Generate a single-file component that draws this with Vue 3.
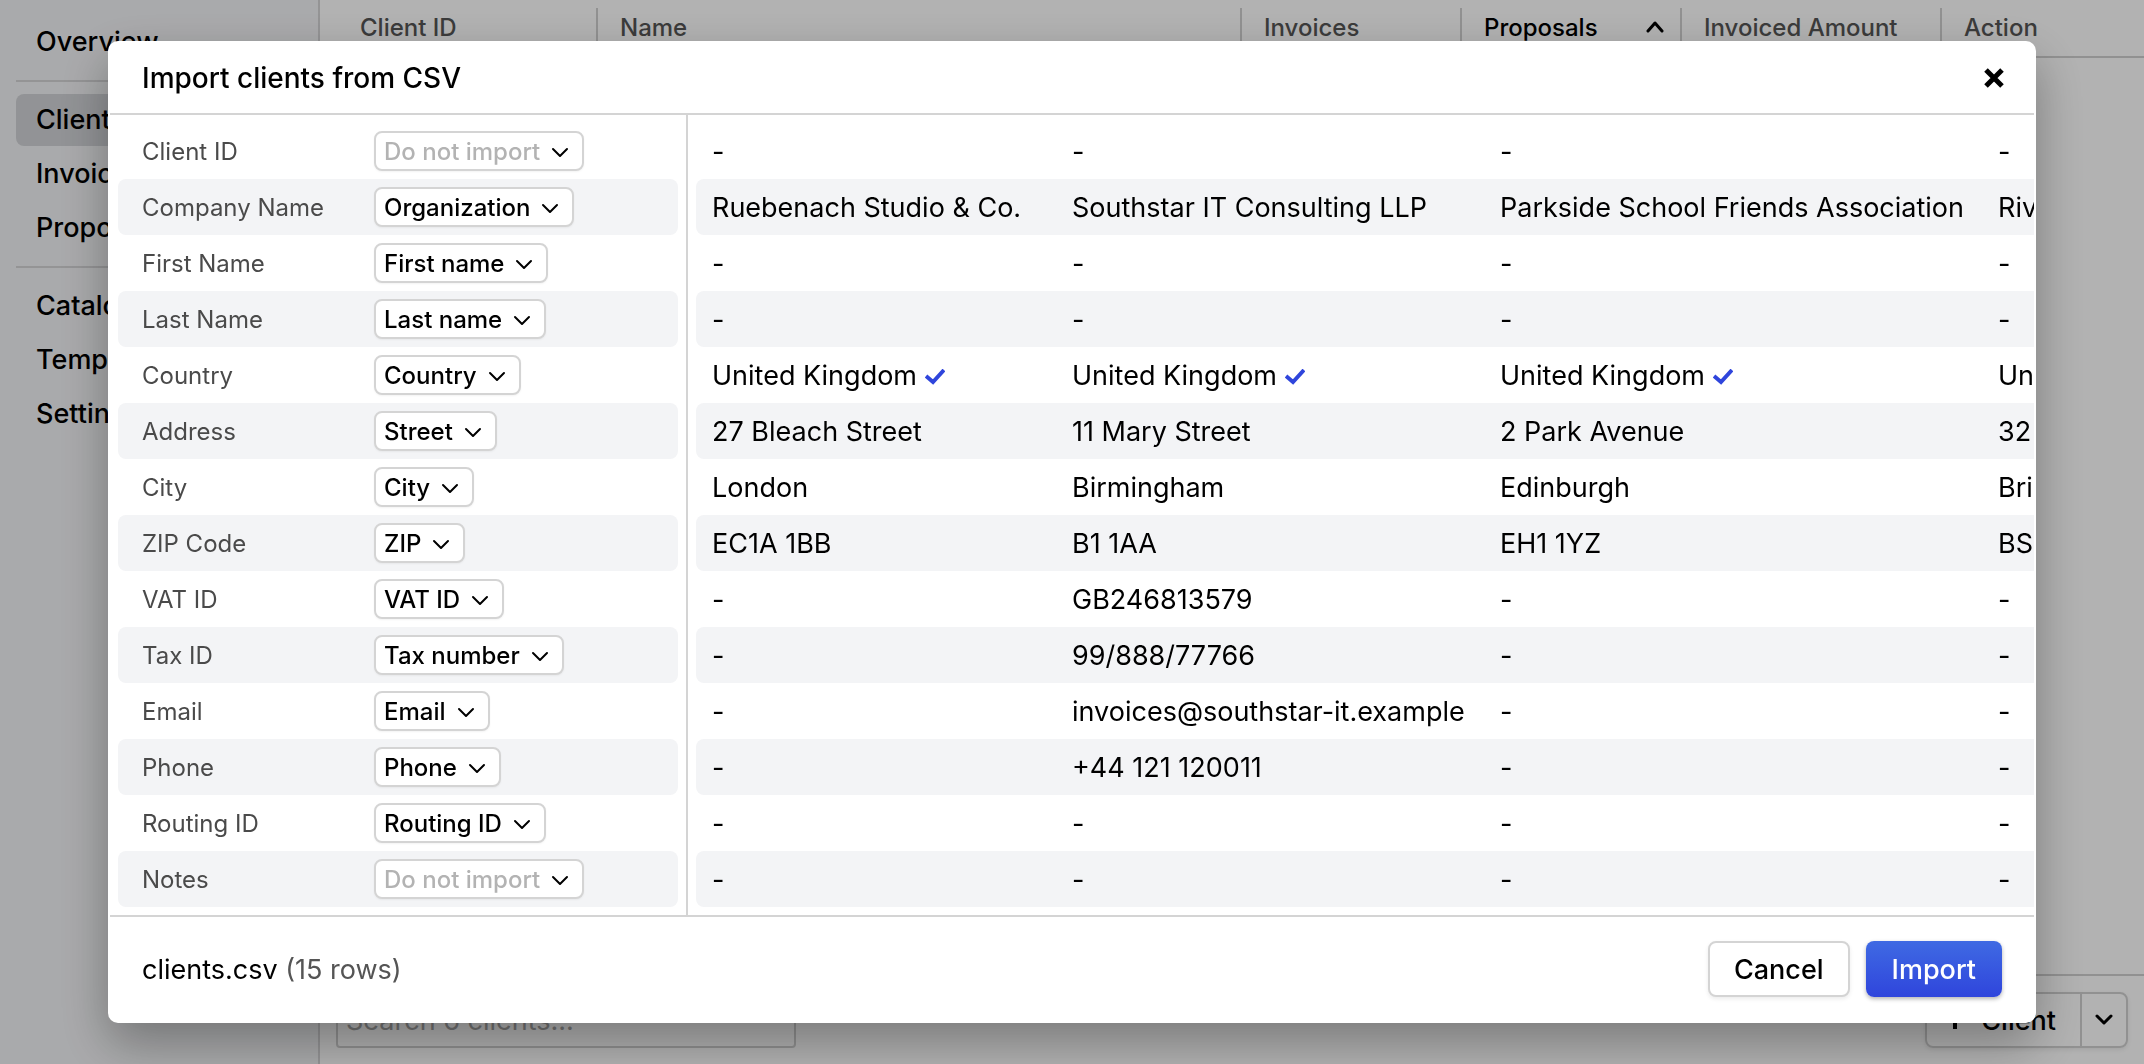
<template>
  <div class="app">
    <nav class="sidebar">
      <template v-for="(group, g) in navGroups" :key="g">
        <hr v-if="g > 0" />
        <a
          v-for="item in group"
          :key="item"
          href="#"
          :class="{ active: item === 'Clients' }"
        >{{ item }}</a>
      </template>
    </nav>

    <main class="main">
      <table class="client-head">
        <thead>
          <tr>
            <th class="col-id">Client ID</th>
            <th>Name</th>
            <th class="col-count">Invoices</th>
            <th class="col-count sorted">
              <span>Proposals</span>
              <svg viewBox="0 0 18 12" width="18" height="12">
                <path d="M2 10l7-8 7 8" />
              </svg>
            </th>
            <th class="col-amount">Invoiced Amount</th>
            <th class="col-action">Action</th>
          </tr>
        </thead>
      </table>

      <div class="toolbar">
        <input type="text" aria-label="Search clients" placeholder="Search 6 clients..." />
        <div class="split">
          <button type="button" class="add">
            <svg viewBox="0 0 20 20" width="20" height="20"><path d="M10 1v18M1 10h18" /></svg>
            Client
          </button>
          <button type="button" class="more" aria-label="More">
            <svg viewBox="0 0 18 12" width="18" height="12"><path d="M2 2l7 7 7-7" /></svg>
          </button>
        </div>
      </div>
    </main>

    <div class="overlay">
      <section class="modal" role="dialog" aria-labelledby="import-title">
        <header class="modal-header">
          <h2 id="import-title">Import clients from CSV</h2>
          <button type="button" class="close" aria-label="Close">
            <svg viewBox="0 0 20 20" width="20" height="20"><path d="M2 2l16 16M18 2L2 18" /></svg>
          </button>
        </header>

        <div class="modal-body">
          <div class="mapping">
            <table>
              <tbody>
                <tr v-for="(field, i) in fields" :key="field.label">
                  <th scope="row"><label :for="'field-' + i">{{ field.label }}</label></th>
                  <td>
                    <span class="picker">
                      <select
                        :id="'field-' + i"
                        v-model="field.column"
                        :class="{ unset: field.column === SKIP }"
                      >
                        <option v-for="c in columns" :key="c">{{ c }}</option>
                      </select>
                      <svg viewBox="0 0 18 12" width="18" height="12"><path d="M2 2l7 7 7-7" /></svg>
                    </span>
                  </td>
                </tr>
              </tbody>
            </table>
          </div>

          <div class="preview">
            <table>
              <colgroup>
                <col class="w1" /><col class="w2" /><col class="w3" /><col class="w4" />
              </colgroup>
              <tbody>
                <tr v-for="field in fields" :key="field.label">
                  <td v-for="(value, v) in field.values" :key="v">
                    {{ value }}
                    <svg v-if="field.label === 'Country'" viewBox="0 0 20 16" width="20" height="16">
                      <path d="M1 7l7 6L19 1" />
                    </svg>
                  </td>
                </tr>
              </tbody>
            </table>
          </div>
        </div>

        <footer class="modal-footer">
          <p>clients.csv <span>(15 rows)</span></p>
          <button type="button" class="btn">Cancel</button>
          <button type="button" class="btn primary">Import</button>
        </footer>
      </section>
    </div>
  </div>
</template>

<script setup>
import { reactive } from 'vue'

const SKIP = 'Do not import'

const navGroups = [
  ['Overview'],
  ['Clients', 'Invoices', 'Proposals'],
  ['Catalog', 'Templates', 'Settings']
]

const columns = [
  SKIP, 'Organization', 'First name', 'Last name', 'Country', 'Street', 'City',
  'ZIP', 'VAT ID', 'Tax number', 'Email', 'Phone', 'Routing ID'
]

const empty = ['-', '-', '-', '-']

const fields = reactive([
  { label: 'Client ID', column: SKIP, values: empty },
  {
    label: 'Company Name',
    column: 'Organization',
    values: ['Ruebenach Studio & Co.', 'Southstar IT Consulting LLP', 'Parkside School Friends Association', 'Riverside']
  },
  { label: 'First Name', column: 'First name', values: empty },
  { label: 'Last Name', column: 'Last name', values: empty },
  { label: 'Country', column: 'Country', values: ['United Kingdom', 'United Kingdom', 'United Kingdom', 'United Kingdom'] },
  { label: 'Address', column: 'Street', values: ['27 Bleach Street', '11 Mary Street', '2 Park Avenue', '32'] },
  { label: 'City', column: 'City', values: ['London', 'Birmingham', 'Edinburgh', 'Bristol'] },
  { label: 'ZIP Code', column: 'ZIP', values: ['EC1A 1BB', 'B1 1AA', 'EH1 1YZ', 'BS1'] },
  { label: 'VAT ID', column: 'VAT ID', values: ['-', 'GB246813579', '-', '-'] },
  { label: 'Tax ID', column: 'Tax number', values: ['-', '99/888/77766', '-', '-'] },
  { label: 'Email', column: 'Email', values: ['-', 'invoices@southstar-it.example', '-', '-'] },
  { label: 'Phone', column: 'Phone', values: ['-', '+44 121 120011', '-', '-'] },
  { label: 'Routing ID', column: 'Routing ID', values: empty },
  { label: 'Notes', column: SKIP, values: empty }
])
</script>

<style>
body {
  margin: 0;
}
</style>

<style scoped>
.app {
  display: flex;
  min-height: 100vh;
  font-family: Inter, "Liberation Sans", sans-serif;
  font-size: 27px;
  color: #000;
  background: #fff;
}

.app *,
.app {
  box-sizing: border-box;
}

svg {
  flex: none;
  fill: none;
  stroke: currentColor;
  stroke-width: 2;
  stroke-linecap: round;
  stroke-linejoin: round;
}

button,
input,
select {
  font: inherit;
  color: inherit;
}

/* Sidebar */
.sidebar {
  display: flex;
  flex-direction: column;
  gap: 2px;
  flex: none;
  width: 320px;
  padding: 16px 14px 16px 16px;
  border-right: 2px solid #d4d4d6;
  background: #f3f4f6;
}

.sidebar a {
  padding: 0 20px;
  border-radius: 8px;
  line-height: 52px;
  font-weight: 500;
  color: #000;
  text-decoration: none;
}

.sidebar a.active {
  background: #d1d3d7;
}

.sidebar hr {
  width: 100%;
  height: 2px;
  margin: 10px 0;
  border: 0;
  background: #d4d4d6;
}

/* Client list behind the dialog */
.main {
  display: flex;
  flex: 1;
  flex-direction: column;
  justify-content: space-between;
  min-width: 0;
}

.client-head {
  width: 100%;
  table-layout: fixed;
  border-collapse: separate;
  border-spacing: 0;
  border-bottom: 2px solid #d0d0d0;
  font-size: 24px;
}

.client-head th {
  height: 56px;
  padding: 0 24px 2px;
  font-weight: 500;
  text-align: left;
  white-space: nowrap;
  color: #555;
  background: linear-gradient(#d0d0d0, #d0d0d0) left center / 2px 40px no-repeat;
}

.client-head th:first-child {
  padding-left: 40px;
  background: none;
}

.client-head th.sorted {
  color: #000;
}

.sorted svg {
  float: right;
  margin-top: 8px;
  margin-right: -8px;
  stroke-width: 3;
}

.col-id {
  width: 276px;
}

.col-count {
  width: 220px;
}

.col-amount {
  width: 260px;
}

.col-action {
  width: 204px;
}

.toolbar {
  display: flex;
  justify-content: space-between;
  padding: 16px;
  border-top: 2px solid #d0d0d0;
}

.toolbar input {
  width: 460px;
  height: 56px;
  padding: 0 8px;
  border: 2px solid #d0d0d0;
  border-radius: 4px;
  background: #fff;
}

.toolbar input::placeholder {
  color: #a6a6a6;
}

.split {
  display: flex;
  height: 56px;
  border: 2px solid #d0d0d0;
  border-radius: 8px;
  box-shadow: 0 2px 4px rgba(0, 0, 0, 0.08);
}

.split button {
  display: flex;
  align-items: center;
  border: 0;
  background: none;
  font-weight: 500;
}

.split .add {
  gap: 16px;
  padding: 0 24px 0 18px;
}

.split .add svg {
  stroke-width: 4;
  stroke-linecap: butt;
}

.split .more {
  padding: 0 13px;
  border-left: 2px solid #d0d0d0;
}

.split .more svg {
  stroke-width: 3;
}

/* Dialog */
.overlay {
  position: fixed;
  inset: 0;
  display: flex;
  align-items: center;
  padding: 0 108px;
  background: rgba(0, 0, 0, 0.3);
}

.modal {
  width: 100%;
  padding: 2px;
  border-radius: 10px;
  background: #fff;
  box-shadow: 0 20px 50px rgba(0, 0, 0, 0.32);
}

.modal-header {
  display: flex;
  align-items: center;
  justify-content: space-between;
  height: 72px;
  padding: 0 30px 0 32px;
  border-bottom: 2px solid #d4d4d4;
}

.modal-header h2 {
  margin: 0;
  font-size: 28px;
  font-weight: 500;
}

.close {
  display: flex;
  padding: 0;
  border: 0;
  background: none;
}

.close svg {
  stroke-width: 5;
  stroke-linecap: butt;
}

.modal-body {
  display: flex;
}

.modal-body table {
  border-collapse: separate;
  border-spacing: 0;
  table-layout: fixed;
}

.modal-body tr {
  height: 56px;
}

.modal-body tr:nth-child(even) > * {
  background: #f3f4f6;
}

.modal-body tr > :first-child {
  border-radius: 8px 0 0 8px;
}

.modal-body tr > :last-child {
  border-radius: 0 8px 8px 0;
}

.mapping {
  flex: none;
  width: 578px;
  padding: 8px;
  border-right: 2px solid #d4d4d4;
}

.mapping table {
  width: 100%;
  font-size: 24px;
}

.mapping th {
  width: 256px;
  padding: 0 0 0 24px;
  font-weight: 400;
  text-align: left;
  color: #4a4a4a;
}

.mapping td {
  padding: 0;
}

.picker {
  position: relative;
  display: flex;
  width: fit-content;
}

.picker select {
  height: 40px;
  padding: 0 42px 0 8px;
  border: 2px solid #d4d4d4;
  border-radius: 8px;
  outline: 0;
  appearance: none;
  field-sizing: content;
  background: #fff;
  font-weight: 500;
  box-shadow: 0 1px 2px rgba(0, 0, 0, 0.05);
}

.picker select.unset {
  color: #b3b3b3;
}

.picker svg {
  position: absolute;
  top: 16px;
  right: 15px;
  pointer-events: none;
}

.preview {
  flex: 1;
  min-width: 0;
  padding: 8px 0 8px 8px;
  overflow-x: auto;
  scrollbar-width: none;
}

.preview table {
  width: 1686px;
}

.preview td {
  padding: 0 16px;
  white-space: nowrap;
}

.preview td svg {
  stroke: #2f45dc;
  stroke-width: 4;
  stroke-linecap: butt;
  stroke-linejoin: miter;
}

.w1 {
  width: 360px;
}

.w2 {
  width: 428px;
}

.w3 {
  width: 498px;
}

.w4 {
  width: 400px;
}

.modal-footer {
  display: flex;
  align-items: center;
  gap: 16px;
  padding: 24px 32px;
  border-top: 2px solid #d4d4d4;
}

.modal-footer p {
  flex: 1;
  margin: 0;
}

.modal-footer p span {
  color: #555;
}

.btn {
  height: 56px;
  padding: 0 24px;
  border: 2px solid #d4d4d4;
  border-radius: 8px;
  background: #fff;
  font-weight: 500;
  box-shadow: 0 2px 4px rgba(0, 0, 0, 0.08);
}

.btn.primary {
  padding: 0 26px;
  border: 0;
  color: #fff;
  background: linear-gradient(#3f6ae3, #2f45dc);
  box-shadow: 0 2px 4px rgba(0, 0, 0, 0.3);
}
</style>
